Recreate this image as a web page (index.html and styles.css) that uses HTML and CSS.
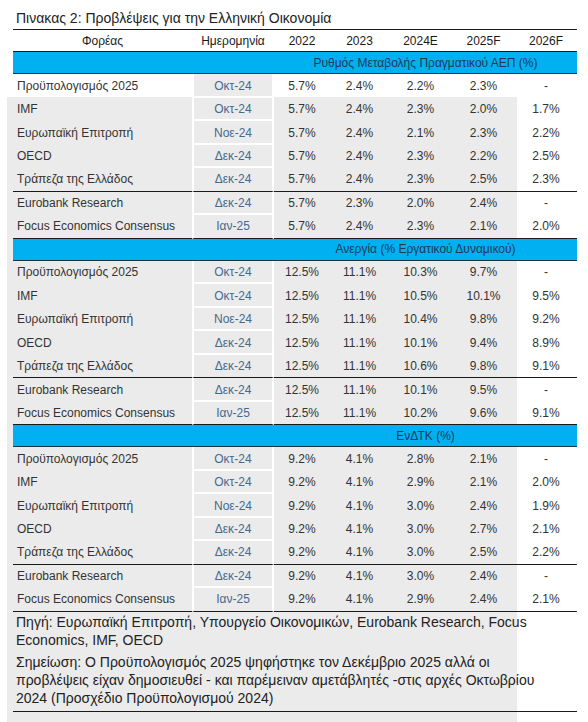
FILE: index.html
```html
<!DOCTYPE html>
<html>
<head>
    <title>Πινακας 2</title>
    <link rel="stylesheet" href="styles.css">
</head>
<body>
    <div class="sheet">
        <div class="title">Πινακας 2: Προβλέψεις για την Ελληνική Οικονομία</div>

        <div class="row head">
            <div>Φορέας</div><div>Ημερομηνία</div><div>2022</div><div>2023</div><div>2024E</div><div>2025F</div><div>2026F</div>
        </div>

        <!-- ΑΕΠ -->
        <div class="band"><div class="band-label">Ρυθμός Μεταβολής Πραγματικού ΑΕΠ (%)</div></div>
        <div class="row"><div class="name">Προϋπολογισμός 2025</div><div class="date">Οκτ-24</div><div>5.7%</div><div>2.4%</div><div>2.2%</div><div>2.3%</div><div>-</div></div>
        <div class="row"><div class="name">IMF</div><div class="date">Οκτ-24</div><div>5.7%</div><div>2.4%</div><div>2.3%</div><div>2.0%</div><div>1.7%</div></div>
        <div class="row"><div class="name">Ευρωπαϊκή Επιτροπή</div><div class="date">Νοε-24</div><div>5.7%</div><div>2.4%</div><div>2.1%</div><div>2.3%</div><div>2.2%</div></div>
        <div class="row"><div class="name">OECD</div><div class="date">Δεκ-24</div><div>5.7%</div><div>2.4%</div><div>2.3%</div><div>2.2%</div><div>2.5%</div></div>
        <div class="row sep"><div class="name">Τράπεζα της Ελλάδος</div><div class="date">Δεκ-24</div><div>5.7%</div><div>2.4%</div><div>2.3%</div><div>2.5%</div><div>2.3%</div></div>
        <div class="row"><div class="name">Eurobank Research</div><div class="date">Δεκ-24</div><div>5.7%</div><div>2.3%</div><div>2.0%</div><div>2.4%</div><div>-</div></div>
        <div class="row sep"><div class="name">Focus Economics Consensus</div><div class="date">Ιαν-25</div><div>5.7%</div><div>2.4%</div><div>2.3%</div><div>2.1%</div><div>2.0%</div></div>

        <!-- Ανεργία -->
        <div class="band"><div class="band-label">Ανεργία (% Εργατικού Δυναμικού)</div></div>
        <div class="row"><div class="name">Προϋπολογισμός 2025</div><div class="date">Οκτ-24</div><div>12.5%</div><div>11.1%</div><div>10.3%</div><div>9.7%</div><div>-</div></div>
        <div class="row"><div class="name">IMF</div><div class="date">Οκτ-24</div><div>12.5%</div><div>11.1%</div><div>10.5%</div><div>10.1%</div><div>9.5%</div></div>
        <div class="row"><div class="name">Ευρωπαϊκή Επιτροπή</div><div class="date">Νοε-24</div><div>12.5%</div><div>11.1%</div><div>10.4%</div><div>9.8%</div><div>9.2%</div></div>
        <div class="row"><div class="name">OECD</div><div class="date">Δεκ-24</div><div>12.5%</div><div>11.1%</div><div>10.1%</div><div>9.4%</div><div>8.9%</div></div>
        <div class="row sep"><div class="name">Τράπεζα της Ελλάδος</div><div class="date">Δεκ-24</div><div>12.5%</div><div>11.1%</div><div>10.6%</div><div>9.8%</div><div>9.1%</div></div>
        <div class="row"><div class="name">Eurobank Research</div><div class="date">Δεκ-24</div><div>12.5%</div><div>11.1%</div><div>10.1%</div><div>9.5%</div><div>-</div></div>
        <div class="row sep"><div class="name">Focus Economics Consensus</div><div class="date">Ιαν-25</div><div>12.5%</div><div>11.1%</div><div>10.2%</div><div>9.6%</div><div>9.1%</div></div>

        <!-- ΕνΔΤΚ -->
        <div class="band"><div class="band-label">ΕνΔΤΚ (%)</div></div>
        <div class="row"><div class="name">Προϋπολογισμός 2025</div><div class="date">Οκτ-24</div><div>9.2%</div><div>4.1%</div><div>2.8%</div><div>2.1%</div><div>-</div></div>
        <div class="row"><div class="name">IMF</div><div class="date">Οκτ-24</div><div>9.2%</div><div>4.1%</div><div>2.9%</div><div>2.1%</div><div>2.0%</div></div>
        <div class="row"><div class="name">Ευρωπαϊκή Επιτροπή</div><div class="date">Νοε-24</div><div>9.2%</div><div>4.1%</div><div>3.0%</div><div>2.4%</div><div>1.9%</div></div>
        <div class="row"><div class="name">OECD</div><div class="date">Δεκ-24</div><div>9.2%</div><div>4.1%</div><div>3.0%</div><div>2.7%</div><div>2.1%</div></div>
        <div class="row sep"><div class="name">Τράπεζα της Ελλάδος</div><div class="date">Δεκ-24</div><div>9.2%</div><div>4.1%</div><div>3.0%</div><div>2.5%</div><div>2.2%</div></div>
        <div class="row"><div class="name">Eurobank Research</div><div class="date">Δεκ-24</div><div>9.2%</div><div>4.1%</div><div>3.0%</div><div>2.4%</div><div>-</div></div>
        <div class="row sep"><div class="name">Focus Economics Consensus</div><div class="date">Ιαν-25</div><div>9.2%</div><div>4.1%</div><div>2.9%</div><div>2.4%</div><div>2.1%</div></div>

        <div class="notes">
            <p>Πηγή: Ευρωπαϊκή Επιτροπή, Υπουργείο Οικονομικών, Eurobank Research, Focus<br>Economics, IMF, OECD</p>
            <p>Σημείωση: Ο Προϋπολογισμός 2025 ψηφήστηκε τον Δεκέμβριο 2025 αλλά οι<br>προβλέψεις είχαν δημοσιευθεί - και παρέμειναν αμετάβλητές -στις αρχές Οκτωβρίου<br>2024 (Προσχέδιο Προϋπολογισμού 2024)</p>
        </div>
    </div>
</body>
</html>
```

FILE: styles.css
```css
html {
    /* grey selection area behind the sheet */
    background: #fff linear-gradient(#ebebeb, #ebebeb) 7px 97px / 510px 640px no-repeat;
}
body {
    margin: 0;
    font-family: "Liberation Sans", Arial, sans-serif;
    color: #333;
}
.sheet {
    width: 564px;
    margin-left: 13px;
}
.title {
    box-sizing: border-box;
    height: 30px;
    padding: 10px 0 0 3px;
    font-size: 14px;
    line-height: 17px;
    color: #222;
    border-bottom: 1px solid #1a1a1a;
}
.row {
    display: grid;
    grid-template-columns: 179px 82px 56px 59px 63px 63px 62px;
    height: 23.5px;
    font-size: 12px;
}
.row > div {
    box-sizing: border-box;
    display: flex;
    align-items: center;
    justify-content: center;
}
.row .name {
    justify-content: flex-start;
    padding-left: 4px;
}
.row .date {
    background: #ebebeb;
    color: #46698e;
    border: 0 solid #fff;
    border-width: 0 2px 2px;
    padding-top: 2px;
}
.row.sep > div {
    border-bottom: 1px solid #1a1a1a;
}
.row.sep .date {
    padding-top: 0;
}
.row.head {
    box-sizing: border-box;
    height: 22px;
    color: #1a1a1a;
    border-bottom: 1px solid #1a1a1a;
}
.band {
    box-sizing: border-box;
    display: grid;
    grid-template-columns: 261px 1fr;
    height: 22px;
    background: #00b0f0;
    border-bottom: 1px solid #1f3345;
    font-size: 12px;
    color: #1d3a56;
}
.band-label {
    grid-column: 2;
    display: flex;
    align-items: center;
    justify-content: center;
}
.notes {
    padding: 1px 0 4px 3px;
    font-size: 14px;
    line-height: 18px;
    color: #222;
    border-bottom: 1px solid #1a1a1a;
}
.notes p {
    margin: 0;
}
.notes p + p {
    margin-top: 4px;
}
```
